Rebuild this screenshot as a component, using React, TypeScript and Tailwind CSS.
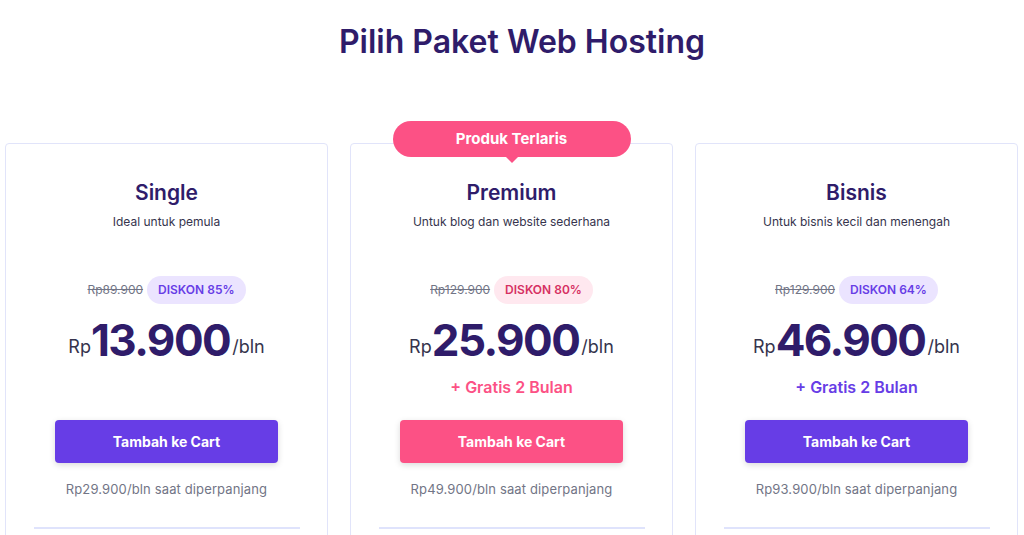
const plans = [
  {
    name: 'Single',
    desc: 'Ideal untuk pemula',
    oldPrice: 'Rp89.900',
    discount: 'DISKON 85%',
    price: '13.900',
    bonus: null as string | null,
    renew: 'Rp29.900/bln saat diperpanjang',
    accent: 'purple',
  },
  {
    name: 'Premium',
    desc: 'Untuk blog dan website sederhana',
    oldPrice: 'Rp129.900',
    discount: 'DISKON 80%',
    price: '25.900',
    bonus: '+ Gratis 2 Bulan',
    renew: 'Rp49.900/bln saat diperpanjang',
    accent: 'pink',
    featured: true,
  },
  {
    name: 'Bisnis',
    desc: 'Untuk bisnis kecil dan menengah',
    oldPrice: 'Rp129.900',
    discount: 'DISKON 64%',
    price: '46.900',
    bonus: '+ Gratis 2 Bulan',
    renew: 'Rp93.900/bln saat diperpanjang',
    accent: 'purple',
  },
];

function PlanCard({ plan }: { plan: (typeof plans)[number] }) {
  const pink = plan.accent === 'pink';
  return (
    <div className="relative flex flex-col items-center rounded-[4px] border border-[#e1e4fa] bg-white pt-[35px]">
      {plan.featured && (
        <div className="absolute left-1/2 top-[-23px] -translate-x-1/2">
          <div className="flex h-[36px] w-[238px] items-center justify-center rounded-full bg-[#fc5185] text-[15px] font-bold text-white">
            Produk Terlaris
          </div>
          <div className="mx-auto h-0 w-0 border-x-[6px] border-t-[6px] border-x-transparent border-t-[#fc5185]" />
        </div>
      )}
      <h2 className="text-[21px] font-semibold leading-[28px] text-[#2f1c6a]">{plan.name}</h2>
      <p className="mt-[6px] text-[12px] leading-[18px] text-[#36344d]">{plan.desc}</p>

      <div className="mt-[45px] flex items-center gap-[4px]">
        <span className="text-[12px] text-[#727586] line-through">{plan.oldPrice}</span>
        <span
          className={
            pink
              ? 'flex h-[28px] items-center rounded-full bg-[#ffe8ef] px-[11px] text-[12px] font-semibold text-[#d63163]'
              : 'flex h-[28px] items-center rounded-full bg-[#ebe4ff] px-[11px] text-[12px] font-semibold text-[#673de6]'
          }
        >
          {plan.discount}
        </span>
      </div>

      <div className="mt-[4px] flex h-[54px] items-end text-[#2f1c6a]">
        <span className="mb-[6px] text-[18px] leading-none text-[#36344d]">Rp</span>
        <span className="text-[44px] font-bold leading-none tracking-[-0.035em]">{plan.price}</span>
        <span className="mb-[6px] ml-[2px] text-[18px] leading-none text-[#36344d]">/bln</span>
      </div>

      <div className="mt-[14px] h-[22px] text-[16px] font-semibold leading-[22px]">
        {plan.bonus && <span className={pink ? 'text-[#fc5185]' : 'text-[#673de6]'}>{plan.bonus}</span>}
      </div>

      <button
        className={
          pink
            ? 'mt-[22px] h-[43px] w-[223px] rounded-[4px] bg-[#fc5185] text-[14px] font-bold text-white shadow-[0_2px_6px_rgba(0,0,0,0.15)]'
            : 'mt-[22px] h-[43px] w-[223px] rounded-[4px] bg-[#673de6] text-[14px] font-bold text-white shadow-[0_2px_6px_rgba(0,0,0,0.15)]'
        }
      >
        Tambah ke Cart
      </button>

      <p className="mt-[17px] text-[13px] leading-[18px] tracking-[0.01em] text-[#727586]">{plan.renew}</p>

      <div className="mt-[29px] h-[2px] w-[266px] bg-[#dfe3fc]" />
      <div className="h-[40px]" />
    </div>
  );
}

export default function App() {
  return (
    <div className="min-h-screen overflow-hidden bg-white font-['Inter',sans-serif]">
      <h1 className="pl-[20px] pt-[23px] text-center text-[32px] font-semibold leading-[38px] text-[#2f1c6a]">
        Pilih Paket Web Hosting
      </h1>
      <div className="mt-[82px] grid grid-cols-3 gap-[22px] pl-[5px] pr-[6px]">
        {plans.map((p) => (
          <PlanCard key={p.name} plan={p} />
        ))}
      </div>
    </div>
  );
}
